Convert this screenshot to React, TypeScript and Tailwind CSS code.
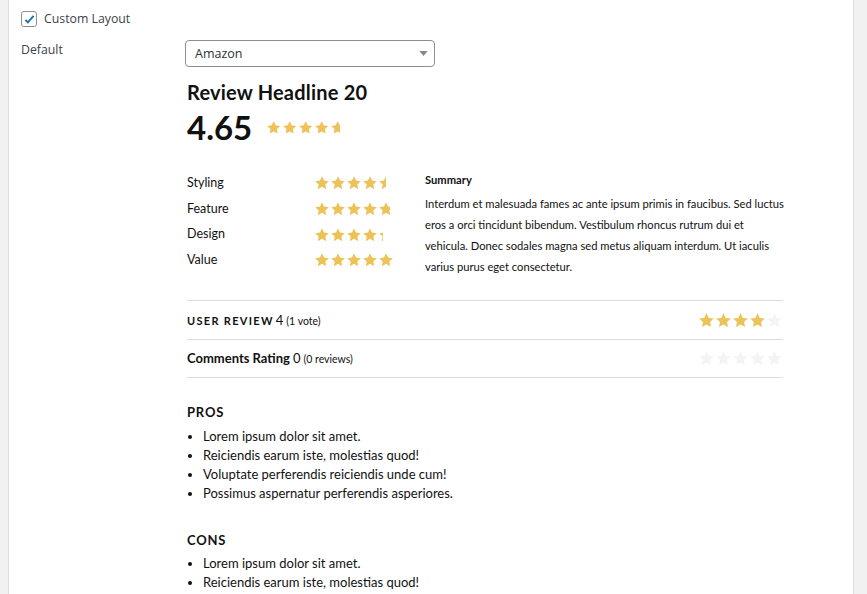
import React from 'react'

const GOLD = '#ebc35a'

function Star({ size, color }: { size: number; color: string }) {
  return (
    <svg width={size} height={size} viewBox="0 0 24 24" aria-hidden="true" className="shrink-0">
      <path
        d="M12 1.8l3.1 6.5 7.1.9-5.2 4.9 1.3 7.1L12 17.8l-6.3 3.4 1.3-7.1L1.8 9.2l7.1-.9z"
        fill={color}
      />
    </svg>
  )
}

function Stars({ value, size, gap, base }: { value: number; size: number; gap: number; base?: string }) {
  const row = (color: string) => (
    <div className="flex" style={{ gap }}>
      {[0, 1, 2, 3, 4].map((i) => (
        <Star key={i} size={size} color={color} />
      ))}
    </div>
  )
  const total = size * 5 + gap * 4
  const filled = Math.floor(value) * (size + gap) + (value % 1) * size
  return (
    <div className="relative" style={{ width: total, height: size }}>
      {base ? row(base) : null}
      <div className="absolute left-0 top-0 overflow-hidden" style={{ width: filled }}>
        {row(GOLD)}
      </div>
    </div>
  )
}

const criteria = [
  { label: 'Styling', value: 4.5 },
  { label: 'Feature', value: 4.75 },
  { label: 'Design', value: 4.3 },
  { label: 'Value', value: 5 },
]

const pros = [
  'Lorem ipsum dolor sit amet.',
  'Reiciendis earum iste, molestias quod!',
  'Voluptate perferendis reiciendis unde cum!',
  'Possimus aspernatur perferendis asperiores.',
]

const cons = ['Lorem ipsum dolor sit amet.', 'Reiciendis earum iste, molestias quod!']

export default function App() {
  return (
    <div className="flex h-[594px] w-[867px] overflow-hidden bg-[#f1f1f1]">
      <div className="w-2 shrink-0" />
      <div className="w-[846px] shrink-0 border-x border-[#dcdcdc] bg-white">
        {/* WP settings rows */}
        <div className="px-[12px] pt-[10px] font-['Open_Sans',sans-serif] text-[12.3px] text-[#3c434a]">
          <label className="flex items-center gap-[7px]">
            <span className="flex h-4 w-4 items-center justify-center rounded-[3px] border border-[#8c8f94] bg-white">
              <svg width="13" height="13" viewBox="0 0 16 16" aria-hidden="true">
                <path d="M3 8.5l3 3 7-8" fill="none" stroke="#2271b1" strokeWidth="2.4" />
              </svg>
            </span>
            Custom Layout
          </label>
          <div className="mt-[12px] flex">
            <div className="w-[164px] shrink-0 pt-[1px] leading-[18px]">Default</div>
            <div className="w-[596px]">
              <div className="flex h-[27px] w-[250px] items-center justify-between rounded-[4px] border border-[#8c8f94] pl-[9px] pr-[6px] text-[12.5px] text-[#2c3338]">
                <span>Amazon</span>
                <svg width="9" height="5" viewBox="0 0 10 6" aria-hidden="true">
                  <path d="M0 0h10L5 6z" fill="#888" />
                </svg>
              </div>
            </div>
          </div>
        </div>

        {/* Review box */}
        <div className="ml-[178px] w-[596px] font-['Lato',sans-serif] text-[#111]">
          <h2 className="mt-[13px] text-[20px] font-bold leading-[24px] tracking-[0.2px]">Review Headline 20</h2>
          <div className="mt-[3px] flex items-center gap-[14px]">
            <span className="text-[33px] font-bold leading-[40px]">4.65</span>
            <Stars value={4.65} size={15.4} gap={0.6} />
          </div>

          <div className="mt-[20px] flex">
            <div className="flex w-[238px] shrink-0 flex-col pt-[3px]">
              {criteria.map((c) => (
                <div key={c.label} className="flex h-[25.7px] items-center">
                  <span className="w-[127px] text-[12.5px]">{c.label}</span>
                  <Stars value={c.value} size={16} gap={0} />
                </div>
              ))}
            </div>
            <div className="w-[361px] shrink-0 pt-[5px] text-[11.2px]">
              <div className="font-bold leading-[16px]">Summary</div>
              <p className="mt-[5px] leading-[21px]">
                Interdum et malesuada fames ac ante ipsum primis in faucibus. Sed luctus eros a orci tincidunt
                bibendum. Vestibulum rhoncus rutrum dui et vehicula. Donec sodales magna sed metus aliquam interdum.
                Ut iaculis varius purus eget consectetur.
              </p>
            </div>
          </div>

          <div className="mt-[23px] border-t border-[#dddddd]">
            <div className="flex h-[39px] items-center justify-between border-b border-[#dddddd]">
              <div className="flex items-baseline">
                <span className="text-[11px] font-bold uppercase tracking-[1.3px]">User Review</span>
                <span className="ml-[2px] text-[13px]">4</span>
                <span className="ml-[3px] text-[10.5px]">(1 vote)</span>
              </div>
              <Stars value={4} size={17} gap={0} base="#f4f4f4" />
            </div>
            <div className="flex h-[38px] items-center justify-between border-b border-[#dddddd]">
              <div className="flex items-baseline">
                <span className="text-[13px] font-bold">Comments Rating</span>
                <span className="ml-[3px] text-[13px]">0</span>
                <span className="ml-[3px] text-[10.5px]">(0 reviews)</span>
              </div>
              <Stars value={0} size={17} gap={0} base="#f4f4f4" />
            </div>
          </div>

          <h3 className="mt-[25px] text-[13px] font-bold leading-[18px] tracking-[0.8px]">PROS</h3>
          <ul className="mt-[6px] list-disc pl-[16px] text-[13px] leading-[19px]">
            {pros.map((p) => (
              <li key={p}>{p}</li>
            ))}
          </ul>

          <h3 className="mt-[28px] text-[13px] font-bold leading-[18px] tracking-[0.8px]">CONS</h3>
          <ul className="mt-[5px] list-disc pl-[16px] text-[13px] leading-[19px]">
            {cons.map((p) => (
              <li key={p}>{p}</li>
            ))}
          </ul>
        </div>
      </div>
    </div>
  )
}
